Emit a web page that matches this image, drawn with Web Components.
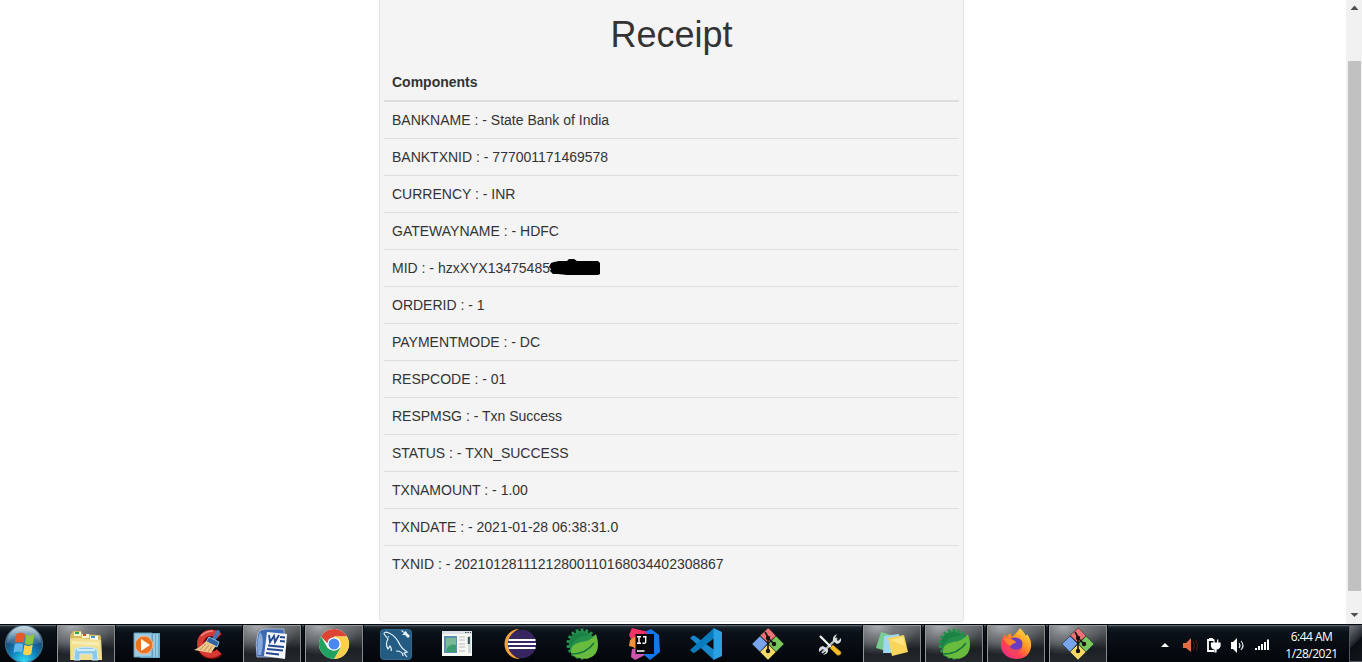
<!DOCTYPE html>
<html lang="en"><head><meta charset="utf-8"><title>Receipt</title>
<style>html,body{margin:0;height:100%;overflow:hidden;background:#fff}body{font-family:"Liberation Sans",Arial,sans-serif}</style></head>
<body>
<desktop-screen>
  <receipt-card heading="Receipt" column="Components">
    <receipt-row name="BANKNAME">State Bank of India</receipt-row>
    <receipt-row name="BANKTXNID">777001171469578</receipt-row>
    <receipt-row name="CURRENCY">INR</receipt-row>
    <receipt-row name="GATEWAYNAME">HDFC</receipt-row>
    <receipt-row name="MID">hzxXYX13475485<redaction-mark></redaction-mark></receipt-row>
    <receipt-row name="ORDERID">1</receipt-row>
    <receipt-row name="PAYMENTMODE">DC</receipt-row>
    <receipt-row name="RESPCODE">01</receipt-row>
    <receipt-row name="RESPMSG">Txn Success</receipt-row>
    <receipt-row name="STATUS">TXN_SUCCESS</receipt-row>
    <receipt-row name="TXNAMOUNT">1.00</receipt-row>
    <receipt-row name="TXNDATE">2021-01-28 06:38:31.0</receipt-row>
    <receipt-row name="TXNID">20210128111212800110168034402308867</receipt-row>
  </receipt-card>
  <scroll-bar slot="scroll"></scroll-bar>
  <task-bar slot="taskbar">
    <task-button icon="folder" active></task-button>
    <task-button icon="media"></task-button>
    <task-button icon="ccleaner"></task-button>
    <task-button icon="word" active></task-button>
    <task-button icon="chrome" active></task-button>
    <task-button icon="mysql"></task-button>
    <task-button icon="panel"></task-button>
    <task-button icon="eclipse"></task-button>
    <task-button icon="spring"></task-button>
    <task-button icon="idea"></task-button>
    <task-button icon="vscode"></task-button>
    <task-button icon="git"></task-button>
    <task-button icon="tools"></task-button>
    <task-button icon="notes" active></task-button>
    <task-button icon="spring" active></task-button>
    <task-button icon="firefox" active></task-button>
    <task-button icon="git" active></task-button>
    <system-tray slot="tray" time="6:44 AM" date="1/28/2021"></system-tray>
  </task-bar>
</desktop-screen>
<script>
const define = (name, render) => customElements.define(name, class extends HTMLElement {
  connectedCallback() {
    if (!this.shadowRoot) this.attachShadow({ mode: 'open' }).innerHTML = render(this);
  }
});

define('desktop-screen', () => `<style>
:host{display:flex;flex-direction:column;height:662px;width:1362px;overflow:hidden}
.view{display:flex;height:624px}
.page{flex:1;display:flex;justify-content:center;align-items:flex-start;padding-right:3px}
</style><div class="view"><div class="page"><slot></slot></div><slot name="scroll"></slot></div><slot name="taskbar"></slot>`);

define('receipt-card', el => `<style>
:host{display:block;box-sizing:border-box;width:585px;height:622px;padding:15px 4px 0;background:#f4f4f4;border:1px solid #e3e3e3;border-top:0;border-radius:0 0 4px 4px;color:#333;font-size:14px;line-height:20px}
h1{margin:0 0 9px;font-size:36px;line-height:40px;font-weight:400;text-align:center}
.head{padding:8px;font-weight:700;border-bottom:2px solid #ddd}
</style><h1>${el.getAttribute('heading')}</h1><div class="head">${el.getAttribute('column')}</div><slot></slot>`);

define('receipt-row', el => `<style>
:host{display:flex;height:20px;padding:8px;border-top:1px solid #ddd;white-space:pre}
:host(:first-child){border-top:0}
</style><span>${el.getAttribute('name')} : - <slot></slot></span>`);

define('redaction-mark', () => `<style>:host{display:inline-block;width:52px;height:18px;margin-left:-1px;vertical-align:top;white-space:normal}svg{display:block}</style>
<svg width="52" height="18" viewBox="0 0 52 18"><path d="M0 9L2 5 5 4 10 3 18 3 20 1 25 1 28 3 49 3 51 5 51 16 49 17 28 17 18 17 9 16 4 16 1 13 2 11Z"/></svg>`);

define('scroll-bar', () => `<style>
:host{display:flex;flex-direction:column;align-items:center;width:16px;background:#f1f1f1;box-sizing:border-box;padding-left:1px}
svg{display:block;width:15px;flex:none}.thumb{width:13px;height:530px;background:#c1c1c1}
</style><svg height="61" viewBox="0 0 15 61"><path d="M3.5 10L7.5 5.5 11.5 10Z" fill="#505050"/></svg><div class="thumb"></div>
<svg height="33" viewBox="0 0 15 33"><path d="M3.5 22L7.5 26 11.5 22Z" fill="#505050"/></svg>`);

define('task-bar', () => `<style>
:host{display:flex;height:38px;box-sizing:border-box;position:relative;border-top:1px solid #05090e;background:linear-gradient(#74808a 0,#39434c 1px,#1b242c 2px,#0b1118 7px,#070c12 60%,#02060a)}
.start{width:57px;flex:none}.start svg{display:block}
.items{display:flex;gap:4px;flex:1}
</style><div class="start"><svg width="57" height="37" viewBox="0 1 57 37"><defs>
<radialGradient id="o" cx=".5" cy=".95" r=".85"><stop offset="0" stop-color="#35d6f5"/><stop offset=".4" stop-color="#0f86bd"/><stop offset=".75" stop-color="#174f80"/><stop offset="1" stop-color="#60819b"/></radialGradient>
<linearGradient id="g" x2="0" y2="1"><stop stop-color="#dfedf3" stop-opacity=".85"/><stop offset="1" stop-color="#8eb4ca" stop-opacity=".15"/></linearGradient></defs>
<circle cx="24" cy="20" r="18.6" fill="url(#o)" stroke="#496c83"/><path d="M7 19A17 17 0 0 1 41 19Q24 23 7 19Z" fill="url(#g)"/>
<path d="M16.5 10Q20 7.5 25 10L23.5 19Q19 17 15 19Z" fill="#e5592b"/><path d="M26.3 10.5Q30 12.5 34.5 10L33 19.5Q29 22 24.8 19.5Z" fill="#8cc63f"/>
<path d="M14.7 20.3Q19 18 23.2 20.3L22 28.5Q18 26.5 13.5 29Z" fill="#62b8ee"/><path d="M24.5 20.8Q28 23 32.7 20.8L31.3 30Q27 32.5 23 30Z" fill="#ffd24a"/>
</svg></div><div class="items"><slot></slot></div><slot name="tray"></slot>`);

const gear = Array.from({ length: 18 }, (_, i) => `<path d="M27.5 4.5H30.5V9H27.5Z" transform="rotate(${i * 20} 29 20)"/>`).join('');
const icons = {
folder: `<path d="M15 9L16 7H24L25 10 42 11Q44 11 44 14L45 36H13V13Q13 9 15 9Z" fill="#d7b95e"/><path d="M17 8H24V12H17Z" fill="#f8f4cf"/><path d="M18 8H22V10H18Z" fill="#29a744"/><path d="M25 10H32V14H25Z" fill="#fff6d1"/><path d="M26 10H29V12H26Z" fill="#d24a2c"/><path d="M33 12H41V16H33Z" fill="#fff"/><path d="M34 12H38V14H34Z" fill="#3a93c9"/><path d="M13 15Q20 13 30 15L44 16 45 36H14Z" fill="#f0df91"/><path d="M15 17L42 18V22L15 20Z" fill="#f7ecb0"/><path d="M18 25Q29 21 40 25L41 36H35V30H23V36H17Z" fill="#8dc9e8" stroke="#cfeefa"/><path d="M20 26H38" stroke="#e8f9ff" stroke-width="1.5"/>`,
media: `<path d="M21 9H41V34H21Z" fill="#69a9ca"/><path d="M38 10V33M35 10V33" stroke="#cbe8f5"/><path d="M15 9H33V33H15Z" fill="#9bcbe2" stroke="#5e9cbd"/><circle cx="25" cy="21" r="8.8" fill="#ec7222" stroke="#f8b27a"/><path d="M22 15L31 21 22 27Z" fill="#fff"/>`,
ccleaner: `<path d="M38.5 12.5A11 11 0 1 0 38.5 28" fill="none" stroke="#8e0d0d" stroke-width="7.5"/><path d="M38 12A11 11 0 1 0 38 27.5" fill="none" stroke="#d63a35" stroke-width="6"/><path d="M20 12Q25 7 32 7" fill="none" stroke="#ee8c83" stroke-width="1.6"/><path d="M37 8L33 15" stroke="#3f76b3" stroke-width="4" stroke-linecap="round"/><path d="M28 13L38 18 36 23 25 18Z" fill="#2d64a0" stroke="#8dbce2"/><path d="M25 17L35 22 30 29 13 26Q20 23 25 17Z" fill="#edc68b"/><path d="M25 20L19 26M28 21L23 27M31 22L27 28" stroke="#b98449" stroke-width=".8"/>`,
word: `<path d="M15 9Q17 5 23 5H41V33H14Q12 20 15 9Z" fill="#3e69b2" stroke="#cbd9ec" stroke-width=".7"/><path d="M17 8Q22 13 18 31L15 31Q13 18 17 8Z" fill="#86a9dc"/><path d="M24 8L44 10 42 35 21 32Z" fill="#f5f8fc"/><path d="M25 21.5L41 23M24 25L40 26.5M23 29L36 30.5" stroke="#244990" stroke-width="1.8"/><path d="M37 13L42 13.5M37 17L42 17.5" stroke="#244990" stroke-width="2"/><path d="M26 11L27 18 31 12 32 18 36 11" fill="none" stroke="#244990" stroke-width="1.9"/>`,
chrome: `<circle cx="29" cy="20" r="15" fill="#fff"/><path d="M29 20L16 12.5A15 15 0 0 1 42 12.5H29Z" fill="#dc4436"/><path d="M29 12.5H42A15 15 0 0 1 29 35L35.5 23.7Z" fill="#fdd04b"/><path d="M16 12.5L22.5 23.8Q26 28 35.5 23.7L29 35A15 15 0 0 1 16 12.5Z" fill="#22a261"/><path d="M16 12.5L23 20 29 12.5Z" fill="#dc4436"/><circle cx="29" cy="20" r="6.8" fill="#fff"/><circle cx="29" cy="20" r="5.5" fill="#4a87ed"/>`,
mysql: `<rect x="13.5" y="5.5" width="31" height="30" rx="3" fill="#245b82" stroke="#316b91"/><path d="M17 10Q17 7 22 9Q29 12 33 21Q35 25 40 28L37 29 40 33M17 10L21 15Q18 20 21 25L23 22Q25 25 24 27M29 27Q36 27 36 32M21 12.5L22 13" fill="none" stroke="#e9f4f8" stroke-width="1.2"/><path d="M35 6L37 8 39 7 40 9 43 12 41 14 38 11 35 11 37 9 34 7Z" fill="#e7f1f5"/>`,
panel: `<path d="M13 7H43V32H13Z" fill="#f7f7f4"/><path d="M13 7H43V10H13Z" fill="#dce2e5"/><path d="M36 8.5H42" stroke="#46515b" stroke-dasharray="1.5 1"/><path d="M15 12H28V29H15Z" fill="#5a8fae"/><path d="M17 14H27V24Q21 21 17 27Z" fill="#7ab996"/><path d="M17 27Q19 19 27 21V28H17Z" fill="#3d9b70"/><path d="M30 13H36M30 16H36M30 20H36M30 23H36M30 27H36" stroke="#b8bcbc"/><path d="M39 12H42V29H39Z" fill="#cdd9d9"/><path d="M39.8 13V20" stroke="#274f53" stroke-width="2"/>`,
eclipse: `<path d="M28 5A15 15 0 1 0 29 35Q19 32 18 20Q18 9 28 5Z" fill="#f5a23a"/><circle cx="31" cy="20" r="14.2" fill="#382660"/><path d="M17.5 16H44.5M17 20H45M17.5 24H44.5" stroke="#fff" stroke-width="2"/>`,
spring: `<g fill="#24904c">${gear}<circle cx="29" cy="20" r="13"/></g><path d="M19 12Q27 5 37 11Q22 12 17 24Q15 17 19 12Z" fill="#1b8245"/><path d="M43 10Q47 22 43 29Q37 37 26 34Q20 33 18 29Q17 20 28 18Q38 17 43 10Z" fill="#68bb3c"/><path d="M19 30Q33 30 41 19" fill="none" stroke="#137440" stroke-width="1.5"/>`,
idea: `<path d="M17 4L29 7 29 20 18 19 14 11Z" fill="#f33366"/><path d="M15 16L23 11V27L18 23 14 22Z" fill="#fa9034"/><path d="M17 25L30 23 30 31 20 36 16 33Z" fill="#cd55ad"/><path d="M29 8L36 5 44 11 45 28 35 36 28 30Z" fill="#1677e8"/><path d="M29 6L34 11H29Z" fill="#d72d73"/><path d="M20.5 10H39V30H20.5Z" fill="#08080d"/><path d="M22 12.8H26M24 12.8V19.5M22 19.3H26M28 12.8H31.5M30.7 12.8V18Q30.7 19.5 27.5 19.3M22 27H29.5" fill="none" stroke="#fff" stroke-width="1.4"/>`,
vscode: `<path d="M13 14L16 11.5 18 12 40 28 37 36Z" fill="#1688cc"/><path d="M13 26L37 4 40 12 18 28.5 16 29Z" fill="#087bbd"/><path d="M36.5 4L45 8V32L36.5 36Z" fill="#27a0e4"/>`,
git: `<rect x="18" y="9" width="22" height="22" rx="2" transform="rotate(45 29 20)" fill="#161c22"/><g stroke="#161c22" stroke-width=".5"><path d="M29 4Q30 4 37 12L29 19 21 11.5Z" fill="#ed7377"/><path d="M21 12L28.5 19.5 21 28 13 20Z" fill="#77a4ed"/><path d="M37 12L45 20 37 28 29.5 20Z" fill="#78c65c"/><path d="M29 20L37 28 29 36 21 28Z" fill="#f4d967"/></g><path d="M26 8L29 13V27M29 14L35 20" fill="none" stroke="#15120f" stroke-width="1.6"/><g fill="#15120f"><circle cx="29" cy="14" r="2.2"/><circle cx="29" cy="27" r="2.2"/><circle cx="35" cy="20" r="2.2"/></g>`,
tools: `<path d="M21 29L36 14" stroke="#b8bec1" stroke-width="2.4"/><path d="M36 10L34 14 37 17 40 14Q41 19 36 20L32 17Q31 12 36 10ZM22 31L25 28 22 25 18 28Q17 23 22 22L27 25Q28 30 22 31Z" fill="#d7dcdf"/><path d="M19 12L30 23" stroke="#f2f4f4" stroke-width="2.2"/><path d="M29 24L32 21 40 28Q40 32 36 31Z" fill="#f4bd22" stroke="#ad7a0e" stroke-width=".6"/>`,
notes: `<path d="M18 8L31 12 27 28 13 24Z" fill="#78ce91"/><path d="M21 12L36 10 37 29 20 29Z" fill="#a2d7f3"/><path d="M25 14L41 11 45 28 29 32Z" fill="#f7d65b"/><path d="M27 16L40 13 42 22Z" fill="#ffe684"/>`,
firefox: `<defs><linearGradient id="fx" x1="1" x2=".2" y2="1"><stop stop-color="#fff34f"/><stop offset=".45" stop-color="#ff9825"/><stop offset=".72" stop-color="#ff4350"/><stop offset="1" stop-color="#e52b8b"/></linearGradient></defs><path d="M33 4Q37 8 39 12L40 10Q45 17 44 23Q42 35 29 35Q16 34 14 23Q13 16 18 10L19 13 23 9 25 13Q29 10 33 4Z" fill="url(#fx)"/><path d="M24 14Q31 12 35 17Q37 26 29 28Q22 27 23 20Z" fill="#6b3bc4"/><path d="M16 15Q22 12 28 17L29 19Q25 19 24 22Q19 20 18 16Z" fill="#ff872d"/><path d="M23 23Q27 28 34 24Q32 30 26 29Q23 27 23 23Z" fill="#e94760"/>`
};

define('task-button', el => `<style>
:host{display:block;box-sizing:border-box;width:58px;height:37px;flex:none}
:host([active]){background:radial-gradient(ellipse 42px 30px at 25% 0,#aeb1b3 0,#777b7e 40%,transparent),linear-gradient(#65696c,#34393c 45%,#1b2024 65%,#25292d);box-shadow:inset 1px 1px #92989b,inset -1px 0 #858b8f,0 0 0 1px #05080b}
svg{display:block}
</style><svg width="58" height="37" viewBox="0 1 58 37">${icons[el.getAttribute('icon')]}</svg>`);

define('system-tray', el => `<style>
:host{display:flex;align-items:stretch;width:206px;color:#fff;font:12px/17px "Open Sans","Noto Sans",sans-serif}
svg{display:block;flex:none}
.clock{width:73px;padding-top:3px;box-sizing:border-box;text-align:center;letter-spacing:-.5px;white-space:nowrap}
.peek{width:13px;margin-left:auto;box-sizing:border-box;border:1px solid #53595e;border-right:0;background:linear-gradient(135deg,#70767a,#20262b 45%,#090e12 50%,#11171b)}
</style><svg width="119" height="37" viewBox="1156 625 119 37">
<path d="M1161 647L1165 643 1169 647Z" fill="#fff"/>
<path d="M1183 643H1186L1191 638V652L1186 648H1183Z" fill="#e66a47"/><path d="M1193 641Q1196 645 1193 650M1196 640Q1199 645 1196 651" fill="none" stroke="#541b15"/>
<path d="M1214 640H1208V651H1214" fill="none" stroke="#fff" stroke-width="1.8"/><path d="M1209 638H1213V640H1209Z" fill="#fff"/><path d="M1211.5 643H1220V646Q1219 649 1216 649V652H1215V649Q1212 649 1211.5 646ZM1214 643V639.5M1217.7 643V639.5" fill="#fff" stroke="#fff" stroke-width="1.2"/>
<path d="M1231 642H1233L1237 638V653L1233 649H1231Z" fill="#fff"/><path d="M1239 643Q1241 645.5 1239 648M1241 641Q1245 645.5 1241 650" fill="none" stroke="#e7ecef" stroke-width="1.1"/>
<path d="M1256 650V648M1259 650V646M1262 650V644M1265 650V642M1268 650V639.5" stroke="#fff" stroke-width="2"/>
</svg><div class="clock">${el.getAttribute('time')}<br>${el.getAttribute('date')}</div><div class="peek"></div>`);
</script></body></html>
